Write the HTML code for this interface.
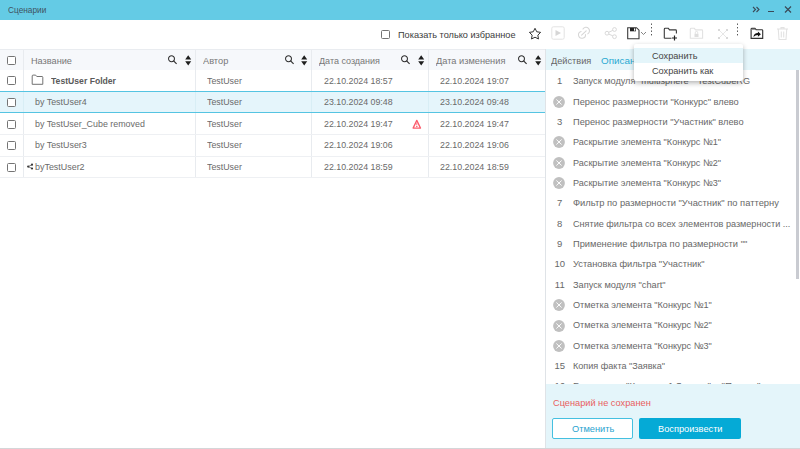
<!DOCTYPE html>
<html><head><meta charset="utf-8">
<style>
*{box-sizing:border-box;margin:0;padding:0}
html,body{width:800px;height:449px;overflow:hidden;background:#fff;font-family:"Liberation Sans",sans-serif;color:#555}
div,svg{position:absolute}
.t{white-space:nowrap;transform-origin:0 0}
.cb{width:9px;height:9px;border:1.25px solid #747474;border-radius:1.5px;background:#fff}
.vl{width:1px;background:#e8ebef}
.hl{height:1px;background:#eef0f3}
</style></head>
<body>
<div style="left:0;top:0;width:800px;height:20px;background:#64cbe5"></div>
<div class="t" style="left:7.50px;top:5.52px;font-size:8.6px;line-height:8.6px;color:#3f5262;transform:scaleX(0.965);">Сценарии</div>
<svg style="left:752px;top:6px" width="8" height="7" viewBox="0 0 8 7"><path d="M1 1L3.5 3.5L1 6M4.5 1L7 3.5L4.5 6" fill="none" stroke="#3a4a58" stroke-width="1.1"/></svg>
<div style="left:768px;top:11px;width:6px;height:1.3px;background:#3a4a58"></div>
<svg style="left:784px;top:6px" width="8" height="7" viewBox="0 0 8 7"><path d="M1 0.5L7 6.5M7 0.5L1 6.5" fill="none" stroke="#3a4a58" stroke-width="1.2"/></svg>
<div class="cb" style="left:381.3px;top:29.8px"></div>
<div class="t" style="left:398.00px;top:29.70px;font-size:9.8px;line-height:9.8px;color:#3c3c3c;transform:scaleX(0.937);">Показать только избранное</div>
<svg style="left:527.7px;top:27px" width="14" height="13" viewBox="0 0 14 13"><path d="M7.00 1.30L8.76 4.77L12.61 5.38L9.85 8.13L10.47 11.97L7.00 10.20L3.53 11.97L4.15 8.13L1.39 5.38L5.24 4.77Z" fill="none" stroke="#2a2a2a" stroke-width="0.95" stroke-linejoin="miter"/></svg>
<svg style="left:551px;top:26px" width="14" height="14" viewBox="0 0 14 14"><rect x="0.8" y="0.8" width="12.4" height="12.4" rx="1.5" fill="none" stroke="#e3e3e3" stroke-width="1"/><path d="M4.5 4L10 7L4.5 10Z" fill="#d6d6d6"/></svg>
<svg style="left:574px;top:24px" width="20" height="18" viewBox="0 0 20 18"><path d="M7.09 7.42A3.5 3.5 0 1 0 11.49 10.49M13.75 9.83A3.5 3.5 0 1 0 8.97 5.05M7.6 11.2L12.2 6.8" fill="none" stroke="#d6d6d6" stroke-width="1.05" stroke-linecap="round"/></svg>
<svg style="left:603px;top:26px" width="15" height="14" viewBox="0 0 15 14"><g fill="none" stroke="#d6d6d6" stroke-width="0.95"><circle cx="4" cy="7.2" r="1.9"/><circle cx="11.5" cy="3.5" r="1.9"/><circle cx="11.5" cy="10.7" r="1.9"/><path d="M5.7 6.3L9.8 4.4M5.7 8.1L9.8 9.8"/></g></svg>
<svg style="left:627px;top:27px" width="13" height="13" viewBox="0 0 13 13"><path d="M0.7 0.7H9.5L12 3.2V11.7H0.7Z" fill="#fff" stroke="#3a3a3a" stroke-width="1.1"/><rect x="3" y="0.9" width="6" height="3.4" fill="#222"/><rect x="7" y="1.4" width="1.3" height="2.3" fill="#fff"/></svg>
<svg style="left:640px;top:31px" width="7" height="5" viewBox="0 0 7 5"><path d="M1 1L3.5 3.5L6 1" fill="none" stroke="#777" stroke-width="0.9"/></svg>
<svg style="left:651px;top:23px" width="2" height="14" viewBox="0 0 2 14"><rect x="0" y="0.5" width="1" height="1.4" fill="#555"/><rect x="0" y="4" width="1" height="1.4" fill="#555"/><rect x="0" y="7.5" width="1" height="1.4" fill="#555"/><rect x="0" y="11" width="1" height="1.4" fill="#555"/></svg>
<svg style="left:663px;top:27px" width="16" height="14" viewBox="0 0 16 14"><path d="M1.3 11.2V2.2Q1.3 1.3 2.2 1.3H5.3L6.6 2.9H12.6Q13.4 2.9 13.4 3.7V6.5M8.5 11.2H1.3" fill="none" stroke="#3a3a3a" stroke-width="1.1"/><path d="M11.5 8.5V13.5M9 11H14" stroke="#222" stroke-width="1.2"/></svg>
<svg style="left:689px;top:27px" width="15" height="13" viewBox="0 0 15 13"><path d="M1.3 11.3V2.2Q1.3 1.3 2.2 1.3H5.3L6.6 2.9H12.8Q13.6 2.9 13.6 3.7V11.3Z" fill="none" stroke="#e2e2e2" stroke-width="1.1"/><rect x="5.5" y="6.8" width="4" height="3.2" fill="#dedede"/><path d="M6.3 6.8V5.6A1.2 1.2 0 0 1 8.7 5.6V6.8" fill="none" stroke="#dedede" stroke-width="0.9"/></svg>
<svg style="left:717px;top:28px" width="12" height="12" viewBox="0 0 12 12"><path d="M2 2L10 10M10 2L2 10" stroke="#e4e4e4" stroke-width="0.9"/><rect x="1" y="1" width="2" height="2" fill="#d9d9d9"/><rect x="9" y="1" width="2" height="2" fill="#d9d9d9"/><rect x="1" y="9" width="2" height="2" fill="#d9d9d9"/><rect x="9" y="9" width="2" height="2" fill="#d9d9d9"/></svg>
<svg style="left:737px;top:23px" width="2" height="14" viewBox="0 0 2 14"><rect x="0" y="0.5" width="1" height="1.4" fill="#555"/><rect x="0" y="4" width="1" height="1.4" fill="#555"/><rect x="0" y="7.5" width="1" height="1.4" fill="#555"/><rect x="0" y="11" width="1" height="1.4" fill="#555"/></svg>
<svg style="left:750px;top:27px" width="14" height="13" viewBox="0 0 14 13"><path d="M1.1 11.4V2.2Q1.1 1.3 2 1.3H4.9L6.1 2.7H11.9Q12.7 2.7 12.7 3.5V11.4Z" fill="none" stroke="#333" stroke-width="1.15"/><rect x="1.6" y="1.7" width="3.6" height="1.3" fill="#9a9a9a"/><path d="M3.4 9.9Q3.9 6.4 7.9 6.1V4.6L10.9 7.2L7.9 9.7V8.1Q5.3 8.1 3.4 9.9Z" fill="#111"/></svg>
<svg style="left:776px;top:26px" width="13" height="15" viewBox="0 0 13 15"><path d="M1 3H12M5 3V1.6H8V3M2.3 3.5L3 13.5H10L10.7 3.5M5.3 5.5V11.5M7.7 5.5V11.5" fill="none" stroke="#e2e2e2" stroke-width="1.1"/></svg>

<div style="left:0;top:49px;width:545px;height:21px;background:#f6f8fb;border-top:1px solid #e9ecf0"></div>
<div class="cb" style="left:7px;top:56px"></div>
<div class="vl" style="left:23px;top:50px;height:127px"></div>
<div class="vl" style="left:195px;top:50px;height:127px"></div>
<div class="vl" style="left:311px;top:50px;height:127px"></div>
<div class="vl" style="left:428px;top:50px;height:127px"></div>
<div class="t" style="left:30.90px;top:55.96px;font-size:9.5px;line-height:9.5px;color:#777777;transform:scaleX(0.965);">Название</div>
<div class="t" style="left:203.00px;top:55.96px;font-size:9.5px;line-height:9.5px;color:#777777;transform:scaleX(0.973);">Автор</div>
<div class="t" style="left:319.25px;top:55.96px;font-size:9.5px;line-height:9.5px;color:#777777;transform:scaleX(0.946);">Дата создания</div>
<div class="t" style="left:435.75px;top:55.96px;font-size:9.5px;line-height:9.5px;color:#777777;transform:scaleX(0.972);">Дата изменения</div>
<svg style="left:167px;top:54px" width="11" height="11" viewBox="0 0 11 11"><circle cx="4.5" cy="4.7" r="2.95" fill="none" stroke="#2e2e2e" stroke-width="1.05"/><path d="M6.6 6.8L9.6 9.8" stroke="#2e2e2e" stroke-width="1.15"/></svg>
<svg style="left:184.5px;top:54.5px" width="7" height="11" viewBox="0 0 7 11"><path d="M0.2 4.4L3.2 0.3L6.2 4.4Z M0.2 6.2L3.2 10.4L6.2 6.2Z" fill="#1e1e1e"/></svg>
<svg style="left:283.5px;top:54px" width="11" height="11" viewBox="0 0 11 11"><circle cx="4.5" cy="4.7" r="2.95" fill="none" stroke="#2e2e2e" stroke-width="1.05"/><path d="M6.6 6.8L9.6 9.8" stroke="#2e2e2e" stroke-width="1.15"/></svg>
<svg style="left:301.0px;top:54.5px" width="7" height="11" viewBox="0 0 7 11"><path d="M0.2 4.4L3.2 0.3L6.2 4.4Z M0.2 6.2L3.2 10.4L6.2 6.2Z" fill="#1e1e1e"/></svg>
<svg style="left:400.3px;top:54px" width="11" height="11" viewBox="0 0 11 11"><circle cx="4.5" cy="4.7" r="2.95" fill="none" stroke="#2e2e2e" stroke-width="1.05"/><path d="M6.6 6.8L9.6 9.8" stroke="#2e2e2e" stroke-width="1.15"/></svg>
<svg style="left:417.8px;top:54.5px" width="7" height="11" viewBox="0 0 7 11"><path d="M0.2 4.4L3.2 0.3L6.2 4.4Z M0.2 6.2L3.2 10.4L6.2 6.2Z" fill="#1e1e1e"/></svg>
<svg style="left:517px;top:54px" width="11" height="11" viewBox="0 0 11 11"><circle cx="4.5" cy="4.7" r="2.95" fill="none" stroke="#2e2e2e" stroke-width="1.05"/><path d="M6.6 6.8L9.6 9.8" stroke="#2e2e2e" stroke-width="1.15"/></svg>
<svg style="left:534.5px;top:54.5px" width="7" height="11" viewBox="0 0 7 11"><path d="M0.2 4.4L3.2 0.3L6.2 4.4Z M0.2 6.2L3.2 10.4L6.2 6.2Z" fill="#1e1e1e"/></svg>
<div class="hl" style="left:0;top:134px;width:545px"></div>
<div class="hl" style="left:0;top:156px;width:545px"></div>
<div class="hl" style="left:0;top:177px;width:545px"></div>
<div style="left:0;top:91px;width:545px;height:22px;background:#e5f5fb;border-top:1.3px solid #55c4e2;border-bottom:1.3px solid #55c4e2"></div>
<div class="vl" style="left:23px;top:92px;height:20px;background:#d8eef5"></div>
<div class="vl" style="left:195px;top:92px;height:20px;background:#d8eef5"></div>
<div class="vl" style="left:311px;top:92px;height:20px;background:#d8eef5"></div>
<div class="vl" style="left:428px;top:92px;height:20px;background:#d8eef5"></div>
<div class="cb" style="left:7px;top:76px"></div>
<div class="cb" style="left:7px;top:98px"></div>
<div class="cb" style="left:7px;top:119.5px"></div>
<div class="cb" style="left:7px;top:141px"></div>
<div class="cb" style="left:7px;top:162.5px"></div>
<svg style="left:31px;top:74px" width="13" height="12" viewBox="0 0 13 12"><path d="M1.2 10.3V2Q1.2 1.1 2.1 1.1H4.6L5.8 2.5H11Q11.8 2.5 11.8 3.3V10.3Z" fill="none" stroke="#6a6a6a" stroke-width="0.95"/></svg>
<div class="t" style="left:51.00px;top:75.96px;font-size:9.5px;line-height:9.5px;color:#5a5a5a;transform:scaleX(0.907);font-weight:bold;">TestUser Folder</div>
<div class="t" style="left:34.50px;top:97.46px;font-size:9.5px;line-height:9.5px;color:#6a6a6a;transform:scaleX(0.936);">by TestUser4</div>
<div class="t" style="left:34.50px;top:118.96px;font-size:9.5px;line-height:9.5px;color:#6a6a6a;transform:scaleX(0.934);">by TestUser_Cube removed</div>
<div class="t" style="left:34.50px;top:140.46px;font-size:9.5px;line-height:9.5px;color:#6a6a6a;transform:scaleX(0.936);">by TestUser3</div>
<svg style="left:26px;top:163px" width="8" height="7" viewBox="0 0 8 7"><circle cx="2.2" cy="3.6" r="1.1" fill="#333"/><circle cx="6" cy="1.7" r="1.1" fill="#333"/><circle cx="6" cy="5.5" r="1.1" fill="#333"/><path d="M2.2 3.6L6 1.7M2.2 3.6L6 5.5" stroke="#444" stroke-width="0.7"/></svg>
<div class="t" style="left:34.70px;top:161.96px;font-size:9.5px;line-height:9.5px;color:#6a6a6a;transform:scaleX(0.939);">byTestUser2</div>
<div class="t" style="left:206.60px;top:75.96px;font-size:9.5px;line-height:9.5px;color:#6a6a6a;transform:scaleX(0.929);">TestUser</div>
<div class="t" style="left:206.60px;top:97.46px;font-size:9.5px;line-height:9.5px;color:#6a6a6a;transform:scaleX(0.929);">TestUser</div>
<div class="t" style="left:206.60px;top:118.96px;font-size:9.5px;line-height:9.5px;color:#6a6a6a;transform:scaleX(0.929);">TestUser</div>
<div class="t" style="left:206.60px;top:140.46px;font-size:9.5px;line-height:9.5px;color:#6a6a6a;transform:scaleX(0.929);">TestUser</div>
<div class="t" style="left:206.60px;top:161.96px;font-size:9.5px;line-height:9.5px;color:#6a6a6a;transform:scaleX(0.929);">TestUser</div>
<div class="t" style="left:323.50px;top:75.96px;font-size:9.5px;line-height:9.5px;color:#6a6a6a;transform:scaleX(0.927);">22.10.2024 18:57</div>
<div class="t" style="left:440.00px;top:75.96px;font-size:9.5px;line-height:9.5px;color:#6a6a6a;transform:scaleX(0.931);">22.10.2024 19:07</div>
<div class="t" style="left:323.50px;top:97.46px;font-size:9.5px;line-height:9.5px;color:#6a6a6a;transform:scaleX(0.927);">23.10.2024 09:48</div>
<div class="t" style="left:440.00px;top:97.46px;font-size:9.5px;line-height:9.5px;color:#6a6a6a;transform:scaleX(0.931);">23.10.2024 09:48</div>
<div class="t" style="left:323.50px;top:118.96px;font-size:9.5px;line-height:9.5px;color:#6a6a6a;transform:scaleX(0.927);">22.10.2024 19:47</div>
<div class="t" style="left:440.00px;top:118.96px;font-size:9.5px;line-height:9.5px;color:#6a6a6a;transform:scaleX(0.931);">22.10.2024 19:47</div>
<div class="t" style="left:323.50px;top:140.46px;font-size:9.5px;line-height:9.5px;color:#6a6a6a;transform:scaleX(0.927);">22.10.2024 19:06</div>
<div class="t" style="left:440.00px;top:140.46px;font-size:9.5px;line-height:9.5px;color:#6a6a6a;transform:scaleX(0.931);">22.10.2024 19:06</div>
<div class="t" style="left:323.50px;top:161.96px;font-size:9.5px;line-height:9.5px;color:#6a6a6a;transform:scaleX(0.927);">22.10.2024 18:59</div>
<div class="t" style="left:440.00px;top:161.96px;font-size:9.5px;line-height:9.5px;color:#6a6a6a;transform:scaleX(0.931);">22.10.2024 18:59</div>
<svg style="left:411px;top:118px" width="12" height="12" viewBox="0 0 12 12"><path d="M5.8 2.4L9.5 10.1H2.1Z" fill="none" stroke="#fb5c6c" stroke-width="1.3" stroke-linejoin="round"/><path d="M5.8 4.8V7.2" stroke="#fb6a7a" stroke-width="0.9"/><circle cx="5.8" cy="8.4" r="0.75" fill="#f85a60"/></svg>
<div style="left:545px;top:49px;width:1px;height:400px;background:#dfe3e7"></div>
<div style="left:546px;top:49px;width:254px;height:21px;background:#e4f5fa"></div>
<div class="t" style="left:551.00px;top:55.96px;font-size:9.5px;line-height:9.5px;color:#666;transform:scaleX(0.969);">Действия</div>
<div class="t" style="left:600.80px;top:55.96px;font-size:9.5px;line-height:9.5px;color:#2aa9d2;transform:scaleX(1.036);">Описание</div>
<div class="t" style="left:557.10px;top:76.16px;font-size:9.5px;line-height:9.5px;color:#686868;">1</div>
<div class="t" style="left:572.80px;top:76.16px;font-size:9.5px;line-height:9.5px;color:#686868;transform:scaleX(0.964);">Запуск модуля "multisphere" "TestCubeRG</div>
<svg style="left:553px;top:95.66px" width="12" height="12" viewBox="0 0 12 12"><circle cx="6" cy="6" r="5.9" fill="#c0c0c0"/><path d="M3.4 3.5L8.6 8.5M8.6 3.5L3.4 8.5" stroke="#fff" stroke-width="0.95"/></svg>
<div class="t" style="left:572.80px;top:96.52px;font-size:9.5px;line-height:9.5px;color:#686868;transform:scaleX(0.973);">Перенос размерности "Конкурс" влево</div>
<div class="t" style="left:557.10px;top:116.88px;font-size:9.5px;line-height:9.5px;color:#686868;">3</div>
<div class="t" style="left:572.80px;top:116.88px;font-size:9.5px;line-height:9.5px;color:#686868;transform:scaleX(0.972);">Перенос размерности "Участник" влево</div>
<svg style="left:553px;top:136.38px" width="12" height="12" viewBox="0 0 12 12"><circle cx="6" cy="6" r="5.9" fill="#c0c0c0"/><path d="M3.4 3.5L8.6 8.5M8.6 3.5L3.4 8.5" stroke="#fff" stroke-width="0.95"/></svg>
<div class="t" style="left:572.80px;top:137.24px;font-size:9.5px;line-height:9.5px;color:#686868;transform:scaleX(0.958);">Раскрытие элемента "Конкурс №1"</div>
<svg style="left:553px;top:156.74px" width="12" height="12" viewBox="0 0 12 12"><circle cx="6" cy="6" r="5.9" fill="#c0c0c0"/><path d="M3.4 3.5L8.6 8.5M8.6 3.5L3.4 8.5" stroke="#fff" stroke-width="0.95"/></svg>
<div class="t" style="left:572.80px;top:157.60px;font-size:9.5px;line-height:9.5px;color:#686868;transform:scaleX(0.958);">Раскрытие элемента "Конкурс №2"</div>
<svg style="left:553px;top:177.10px" width="12" height="12" viewBox="0 0 12 12"><circle cx="6" cy="6" r="5.9" fill="#c0c0c0"/><path d="M3.4 3.5L8.6 8.5M8.6 3.5L3.4 8.5" stroke="#fff" stroke-width="0.95"/></svg>
<div class="t" style="left:572.80px;top:177.96px;font-size:9.5px;line-height:9.5px;color:#686868;transform:scaleX(0.958);">Раскрытие элемента "Конкурс №3"</div>
<div class="t" style="left:557.10px;top:198.32px;font-size:9.5px;line-height:9.5px;color:#686868;">7</div>
<div class="t" style="left:572.80px;top:198.32px;font-size:9.5px;line-height:9.5px;color:#686868;transform:scaleX(0.985);">Фильтр по размерности "Участник" по паттерну</div>
<div class="t" style="left:557.10px;top:218.68px;font-size:9.5px;line-height:9.5px;color:#686868;">8</div>
<div class="t" style="left:572.80px;top:218.68px;font-size:9.5px;line-height:9.5px;color:#686868;transform:scaleX(0.956);">Снятие фильтра со всех элементов размерности ...</div>
<div class="t" style="left:557.10px;top:239.04px;font-size:9.5px;line-height:9.5px;color:#686868;">9</div>
<div class="t" style="left:572.80px;top:239.04px;font-size:9.5px;line-height:9.5px;color:#686868;transform:scaleX(0.979);">Применение фильтра по размерности ""</div>
<div class="t" style="left:554.46px;top:259.40px;font-size:9.5px;line-height:9.5px;color:#686868;">10</div>
<div class="t" style="left:572.80px;top:259.40px;font-size:9.5px;line-height:9.5px;color:#686868;transform:scaleX(0.976);">Установка фильтра "Участник"</div>
<div class="t" style="left:554.81px;top:279.76px;font-size:9.5px;line-height:9.5px;color:#686868;">11</div>
<div class="t" style="left:572.80px;top:279.76px;font-size:9.5px;line-height:9.5px;color:#686868;transform:scaleX(0.972);">Запуск модуля "chart"</div>
<svg style="left:553px;top:299.26px" width="12" height="12" viewBox="0 0 12 12"><circle cx="6" cy="6" r="5.9" fill="#c0c0c0"/><path d="M3.4 3.5L8.6 8.5M8.6 3.5L3.4 8.5" stroke="#fff" stroke-width="0.95"/></svg>
<div class="t" style="left:572.80px;top:300.12px;font-size:9.5px;line-height:9.5px;color:#686868;transform:scaleX(0.961);">Отметка элемента "Конкурс №1"</div>
<svg style="left:553px;top:319.62px" width="12" height="12" viewBox="0 0 12 12"><circle cx="6" cy="6" r="5.9" fill="#c0c0c0"/><path d="M3.4 3.5L8.6 8.5M8.6 3.5L3.4 8.5" stroke="#fff" stroke-width="0.95"/></svg>
<div class="t" style="left:572.80px;top:320.48px;font-size:9.5px;line-height:9.5px;color:#686868;transform:scaleX(0.961);">Отметка элемента "Конкурс №2"</div>
<svg style="left:553px;top:339.98px" width="12" height="12" viewBox="0 0 12 12"><circle cx="6" cy="6" r="5.9" fill="#c0c0c0"/><path d="M3.4 3.5L8.6 8.5M8.6 3.5L3.4 8.5" stroke="#fff" stroke-width="0.95"/></svg>
<div class="t" style="left:572.80px;top:340.84px;font-size:9.5px;line-height:9.5px;color:#686868;transform:scaleX(0.961);">Отметка элемента "Конкурс №3"</div>
<div class="t" style="left:554.46px;top:361.20px;font-size:9.5px;line-height:9.5px;color:#686868;">15</div>
<div class="t" style="left:572.80px;top:361.20px;font-size:9.5px;line-height:9.5px;color:#686868;transform:scaleX(0.957);">Копия факта "Заявка"</div>
<div class="t" style="left:554.46px;top:380.96px;font-size:9.5px;line-height:9.5px;color:#686868;">16</div>
<div class="t" style="left:572.80px;top:380.96px;font-size:9.5px;line-height:9.5px;color:#686868;transform:scaleX(1.023);">Включение "Конкурс 1 Заявка" в "Проект"</div>
<div style="left:796px;top:70px;width:3px;height:209px;background:#c9cbd1"></div>
<div style="left:546px;top:384px;width:254px;height:64px;background:#e4f5fa"></div>
<div style="left:0;top:448px;width:800px;height:1px;background:#d4d6d8"></div>
<div class="t" style="left:553.00px;top:397.96px;font-size:9.5px;line-height:9.5px;color:#e8605e;transform:scaleX(0.969);">Сценарий не сохранен</div>
<div style="left:552px;top:418px;width:81px;height:21px;background:#fff;border:1px solid #45c0e0;border-radius:2px"></div>
<div class="t" style="left:571.70px;top:423.96px;font-size:9.5px;line-height:9.5px;color:#2aa3cf;transform:scaleX(0.973);">Отменить</div>
<div style="left:639px;top:418px;width:102px;height:21px;background:#05aad6;border-radius:2px"></div>
<div class="t" style="left:657.70px;top:423.96px;font-size:9.5px;line-height:9.5px;color:#fff;transform:scaleX(0.972);">Воспроизвести</div>
<div style="left:634px;top:44px;width:109px;height:37px;background:#fff;box-shadow:0 2px 5px rgba(0,0,0,0.3);border-radius:2px"></div>
<div style="left:634px;top:48px;width:109px;height:15px;background:#e4f5fa"></div>
<div class="t" style="left:651.50px;top:51.46px;font-size:9.5px;line-height:9.5px;color:#444;transform:scaleX(0.963);">Сохранить</div>
<div class="t" style="left:651.50px;top:65.96px;font-size:9.5px;line-height:9.5px;color:#444;transform:scaleX(0.964);">Сохранить как</div>
</body></html>
